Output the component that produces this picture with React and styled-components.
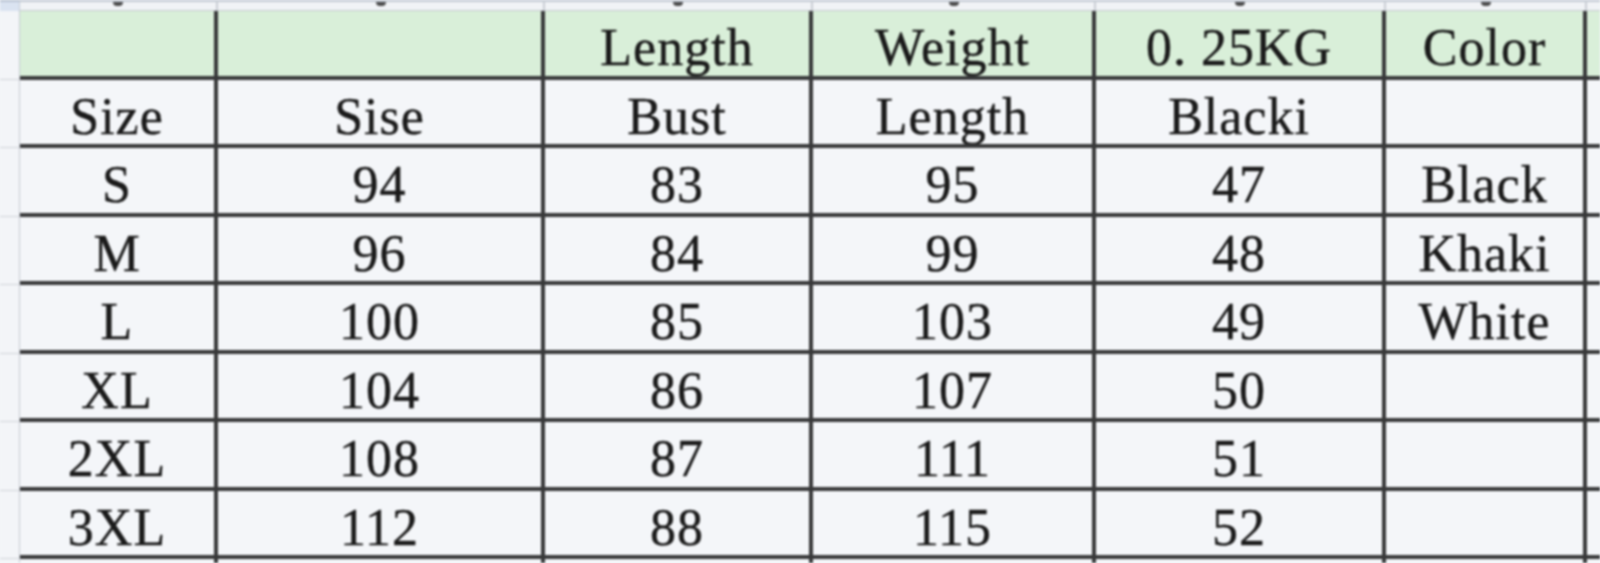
import styled, { createGlobalStyle } from 'styled-components';

const GlobalStyle = createGlobalStyle`
  html, body {
    margin: 0;
    padding: 0;
    background: #f4f6f9;
    overflow: hidden;
  }
`;

const LINE = '#38393a';

const Sheet = styled.div`
  width: 1600px;
  height: 563px;
  overflow: hidden;
  display: grid;
  grid-template-columns: 20px 198px 327px 268px 283px 290px 201px 1fr;
  grid-template-rows: 11px repeat(8, 68.5px) 40px;
  background: #f4f6f9;
  filter: blur(0.8px);
  font-family: "Liberation Serif", "DejaVu Serif", serif;
`;

const GhostGutter = styled.div`
  background: #dae3f1;
  border-top: 2px solid #b9c3d3;
  border-right: 1px solid #c6ccd6;
`;

const GhostCell = styled.div`
  display: flex;
  justify-content: center;
  align-items: flex-start;
  background: #f1f3f6;
  border-top: 2px solid #c3c9d3;
  border-right: ${({ $last }) => ($last ? 'none' : '2px solid #c9cdd4')};
  border-bottom: 1px solid #c7cbd1;
`;

const Mark = styled.span`
  width: 10px;
  height: 4px;
  border-radius: 0 0 4px 4px;
  background: #4a4a4a;
`;

const GutterCell = styled.div`
  background: #f3f5f8;
  border-right: 1px solid #c6cad1;
  border-bottom: ${({ $tail }) => ($tail ? 'none' : '1px solid #d0d3d8')};
`;

const Cell = styled.div`
  display: flex;
  align-items: center;
  justify-content: center;
  padding-top: 10px;
  box-sizing: border-box;
  background: ${({ $head }) => ($head ? '#d9efd9' : '#f4f6f9')};
  border-right: ${({ $last }) => ($last ? 'none' : `4px solid ${LINE}`)};
  border-bottom: ${({ $tail }) => ($tail ? 'none' : `4px solid ${LINE}`)};
  color: #1a1a1a;
  font-size: 52px;
  letter-spacing: 1px;
  line-height: 1;
  white-space: nowrap;
  overflow: hidden;
  -webkit-text-stroke: 0.4px #1a1a1a;
`;

const HEAD = ['', '', 'Length', 'Weight', '0. 25KG', 'Color'];

const ROWS = [
  ['Size', 'Sise', 'Bust', 'Length', 'Blacki', ''],
  ['S', '94', '83', '95', '47', 'Black'],
  ['M', '96', '84', '99', '48', 'Khaki'],
  ['L', '100', '85', '103', '49', 'White'],
  ['XL', '104', '86', '107', '50', ''],
  ['2XL', '108', '87', '111', '51', ''],
  ['3XL', '112', '88', '115', '52', ''],
];

const SizeChart = () => {
  return (
    <Sheet>
      <GhostGutter />
      {HEAD.map((_, i) => (
        <GhostCell key={`ghost-${i}`}>
          <Mark />
        </GhostCell>
      ))}
      <GhostCell $last />

      <GutterCell />
      {HEAD.map((text, i) => (
        <Cell key={`head-${i}`} $head>
          {text}
        </Cell>
      ))}
      <Cell $head $last />

      {ROWS.map((row, r) => [
        <GutterCell key={`gut-${r}`} />,
        ...row.map((text, c) => <Cell key={`cell-${r}-${c}`}>{text}</Cell>),
        <Cell key={`edge-${r}`} $last />,
      ])}

      <GutterCell $tail />
      {HEAD.map((_, i) => (
        <Cell key={`tail-${i}`} $tail />
      ))}
      <Cell $tail $last />
    </Sheet>
  );
};

export default function App() {
  return (
    <>
      <GlobalStyle />
      <SizeChart />
    </>
  );
}
